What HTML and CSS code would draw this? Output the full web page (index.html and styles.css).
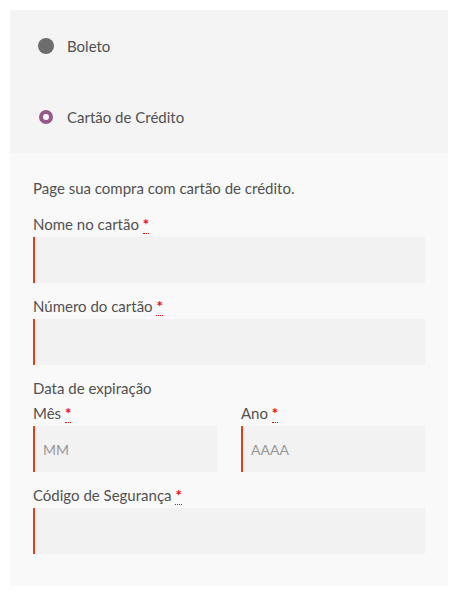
FILE: index.html
```html
<!DOCTYPE html>
<html lang="pt-BR">
<head>
<meta charset="utf-8">
<link rel="stylesheet" href="styles.css">
</head>
<body>
<div class="payment">
  <ul class="methods">
    <li class="method">
      <span class="radio"></span>
      <span class="method-label">Boleto</span>
    </li>
    <li class="method">
      <span class="radio checked"></span>
      <span class="method-label">Cartão de Crédito</span>
    </li>
  </ul>
  <div class="box">
    <p class="intro">Page sua compra com cartão de crédito.</p>
    <div class="field">
      <label class="label">Nome no cartão <abbr class="req" title="obrigatório">*</abbr></label>
      <div class="input"></div>
    </div>
    <div class="field">
      <label class="label">Número do cartão <abbr class="req" title="obrigatório">*</abbr></label>
      <div class="input"></div>
    </div>
    <div class="field">
      <div class="group-title">Data de expiração</div>
      <div class="cols">
        <div>
          <label class="label">Mês <abbr class="req" title="obrigatório">*</abbr></label>
          <div class="input"><span class="ph">MM</span></div>
        </div>
        <div>
          <label class="label">Ano <abbr class="req" title="obrigatório">*</abbr></label>
          <div class="input"><span class="ph">AAAA</span></div>
        </div>
      </div>
    </div>
    <div class="field">
      <label class="label">Código de Segurança <abbr class="req" title="obrigatório">*</abbr></label>
      <div class="input"></div>
    </div>
  </div>
</div>
</body>
</html>
```
FILE: styles.css
```css
html, body { margin: 0; padding: 0; background: #fff; }
body {
  padding: 10px;
  font-family: "Lato", "Open Sans", sans-serif;
  font-size: 15px;
  color: #515151;
}
.payment { background: #f4f4f4; }
.methods { list-style: none; margin: 0; padding: 0 0 0 28px; }
.method {
  display: flex;
  align-items: center;
  height: 72px;
}
.method:first-child { height: 71px; }
.radio {
  width: 16px;
  height: 16px;
  border-radius: 50%;
  background: #6d6d6d;
  box-sizing: border-box;
  margin-right: 13px;
}
.radio.checked {
  width: 14px;
  height: 14px;
  margin-left: 1px;
  margin-right: 14px;
  background: #fff;
  border: 4px solid #96588a;
}
.method-label { line-height: 20px; }
.box {
  background: #f9f9f9;
  padding: 24px 23px 32px 23px;
}
.intro { margin: 0 0 14px 0; line-height: 22px; }
.field { margin-bottom: 12px; }
.field:last-child { margin-bottom: 0; }
.label, .group-title { display: block; line-height: 22px; margin-bottom: 2px; }
.group-title { margin-bottom: 3px; }
.req {
  color: #ff0000;
  text-decoration: none;
  border-bottom: 1px dotted #ff0000;
  font-weight: bold;
  cursor: help;
}
.input {
  height: 46px;
  background: #f2f2f2;
  border-left: 2px solid #e2401c;
  box-sizing: border-box;
  display: flex;
  align-items: center;
  padding-left: 8px;
}
.ph { color: #999; font-size: 14px; }
.cols {
  display: grid;
  grid-template-columns: 1fr 1fr;
  column-gap: 24px;
}
```
